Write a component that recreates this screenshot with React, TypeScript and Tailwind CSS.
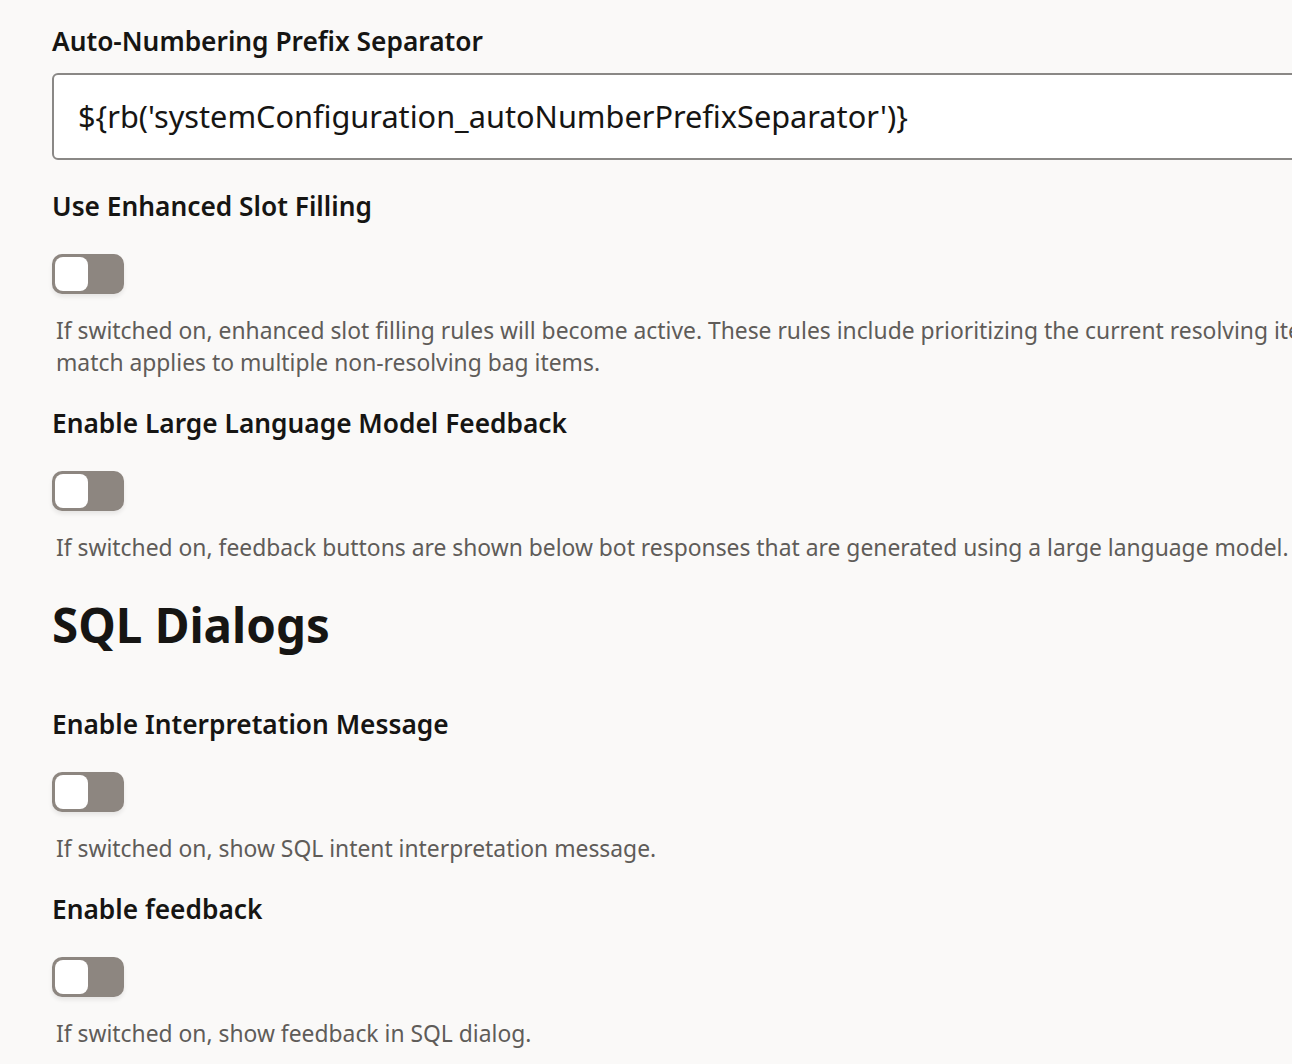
import React from "react";

function Toggle() {
  return (
    <div className="w-[72px] h-[40px] rounded-[10px] bg-[#8d8680] p-[3px] shadow-[0_3px_4px_rgba(0,0,0,0.08)]">
      <div className="w-[33px] h-[34px] rounded-[8px] bg-white" />
    </div>
  );
}

function Label({ children }: { children: React.ReactNode }) {
  return (
    <div className="text-[26.3px] leading-[32px] font-semibold text-[#161513] whitespace-nowrap">
      {children}
    </div>
  );
}

function Desc({ children }: { children: React.ReactNode }) {
  return (
    <div className="pl-[4px] text-[22.85px] leading-[32px] text-[#5f5c59] whitespace-nowrap">
      {children}
    </div>
  );
}

export default function App() {
  return (
    <div
      className="w-[1292px] h-[1064px] overflow-hidden bg-[#faf9f8]"
      style={{ fontFamily: '"Noto Sans", "Open Sans", sans-serif' }}
    >
      <div className="w-[1600px] pl-[52px] pt-[25px] flex flex-col">
        <Label>Auto-Numbering Prefix Separator</Label>
        <div className="mt-[16px] h-[87px] w-[1400px] rounded-[6px] border-2 border-[#8a8886] bg-white flex items-center pl-[24px]">
          <span className="text-[30.7px] text-[#161513] whitespace-nowrap">
            {"${rb('systemConfiguration_autoNumberPrefixSeparator')}"}
          </span>
        </div>

        <div className="mt-[30px]">
          <Label>Use Enhanced Slot Filling</Label>
        </div>
        <div className="mt-[32px]">
          <Toggle />
        </div>
        <div className="mt-[21px]">
          <Desc>
            If switched on, enhanced slot filling rules will become active. These rules include prioritizing the current resolving item and not slotting an entity when the
          </Desc>
          <Desc>match applies to multiple non-resolving bag items.</Desc>
        </div>

        <div className="mt-[28px]">
          <Label>Enable Large Language Model Feedback</Label>
        </div>
        <div className="mt-[32px]">
          <Toggle />
        </div>
        <div className="mt-[21px]">
          <Desc>
            If switched on, feedback buttons are shown below bot responses that are generated using a large language model.
          </Desc>
        </div>

        <div className="mt-[31px] text-[47.5px] leading-[60px] font-bold text-[#161513]">SQL Dialogs</div>

        <div className="mt-[53px]">
          <Label>Enable Interpretation Message</Label>
        </div>
        <div className="mt-[32px]">
          <Toggle />
        </div>
        <div className="mt-[21px]">
          <Desc>If switched on, show SQL intent interpretation message.</Desc>
        </div>

        <div className="mt-[28px]">
          <Label>Enable feedback</Label>
        </div>
        <div className="mt-[32px]">
          <Toggle />
        </div>
        <div className="mt-[21px]">
          <Desc>If switched on, show feedback in SQL dialog.</Desc>
        </div>
      </div>
    </div>
  );
}
